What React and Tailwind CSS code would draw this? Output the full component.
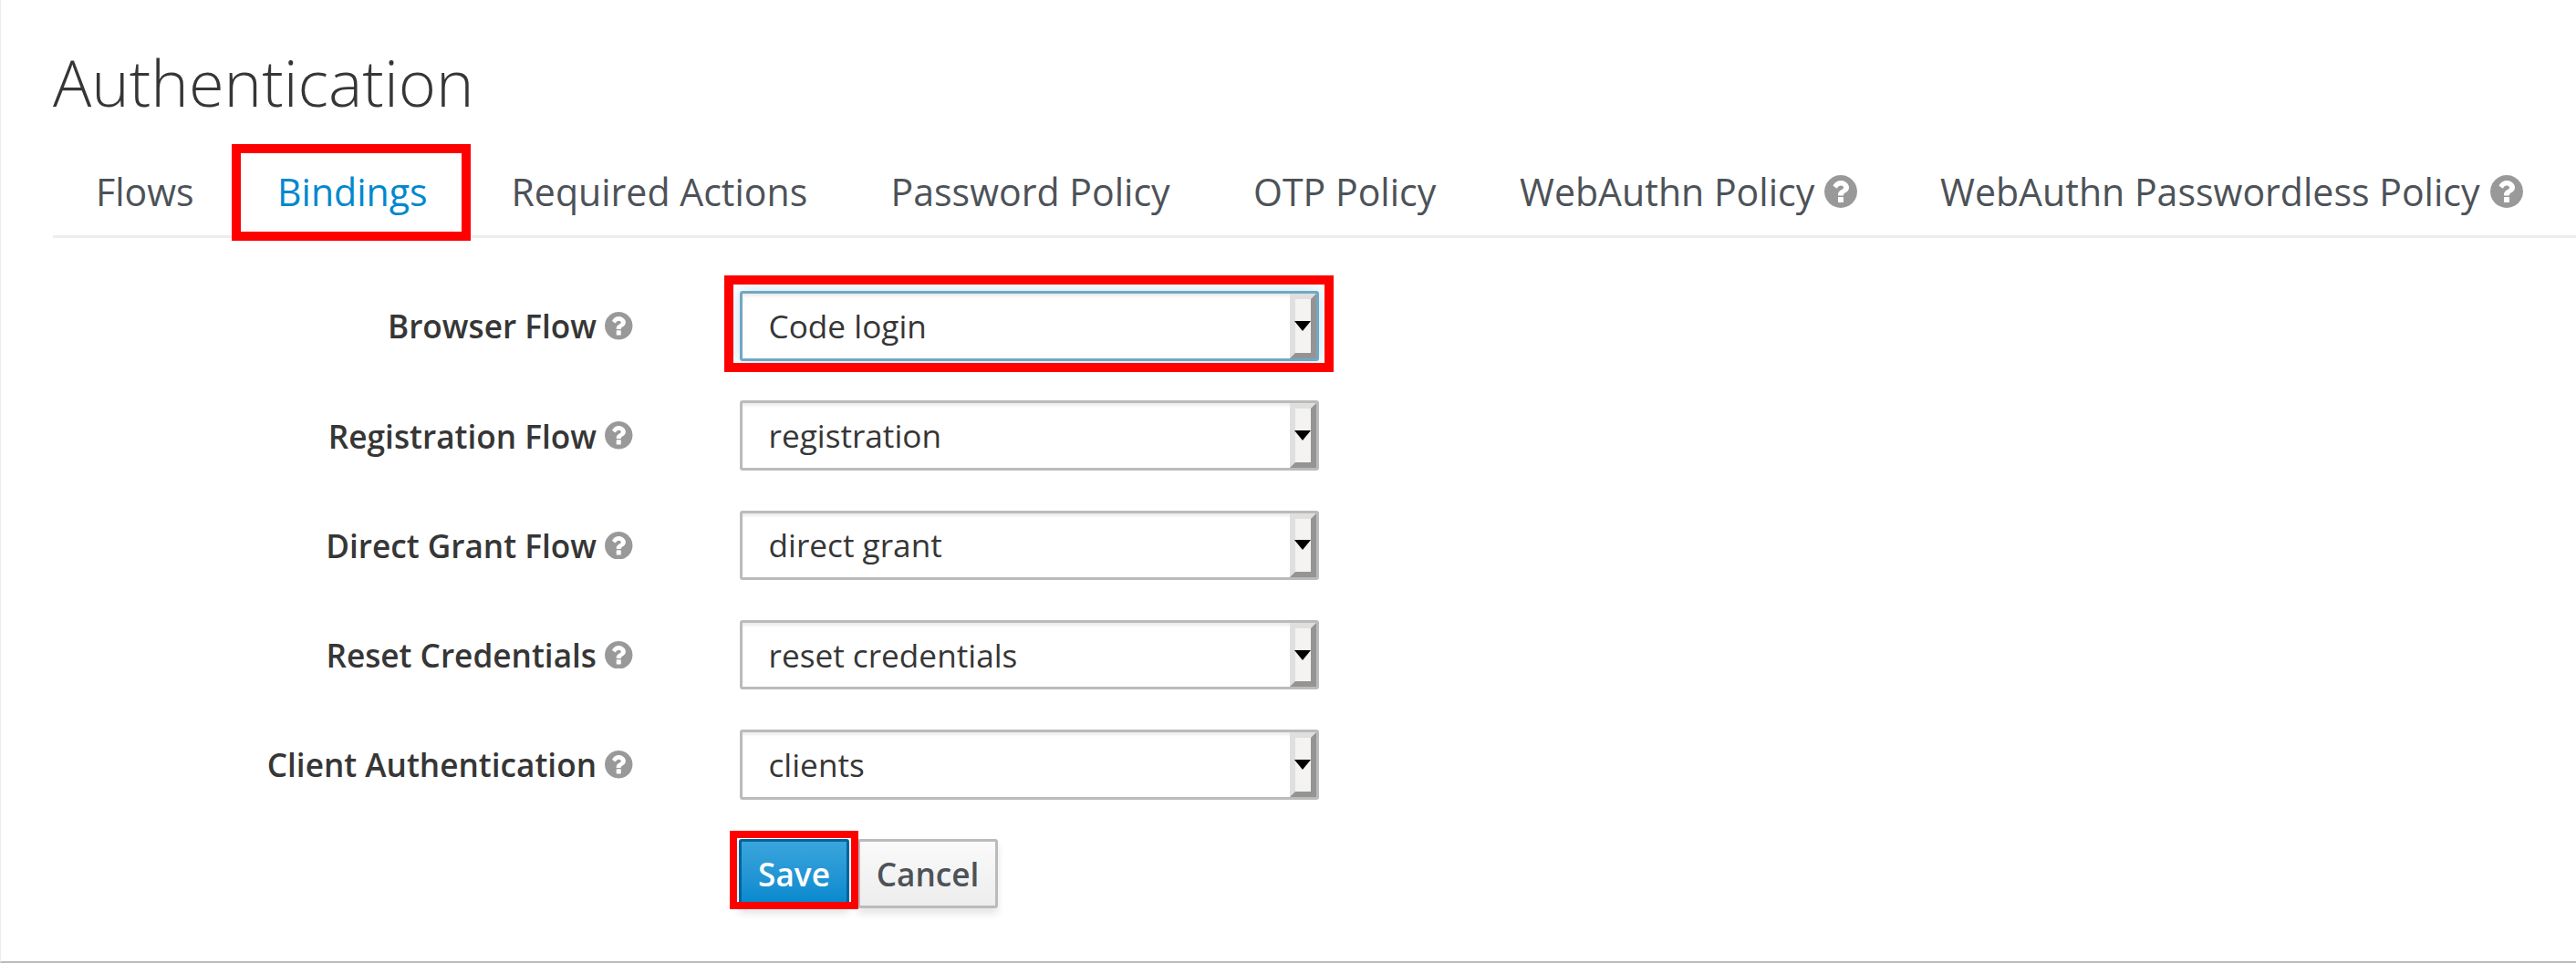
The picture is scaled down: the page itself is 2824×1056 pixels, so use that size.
import React from "react";

const tabs = [
  { label: "Flows", width: "w-[199px]" },
  { label: "Bindings", width: "w-[256.5px]", active: true },
  { label: "Required Actions", width: "w-[416px]" },
  { label: "Password Policy", width: "w-[397.5px]" },
  { label: "OTP Policy", width: "w-[292px]" },
  { label: "WebAuthn Policy", width: "w-[461px]", help: true },
  { label: "WebAuthn Passwordless Policy", width: "w-[690px]", help: true },
];

const fields = [
  { label: "Browser Flow", value: "Code login", focused: true },
  { label: "Registration Flow", value: "registration" },
  { label: "Direct Grant Flow", value: "direct grant" },
  { label: "Reset Credentials", value: "reset credentials" },
  { label: "Client Authentication", value: "clients" },
];

function HelpIcon({ className }) {
  return (
    <svg viewBox="128 128 1536 1536" fill="currentColor" className={`shrink-0 text-[#999] ${className}`}>
      <path d="M1024 1376v-192q0-14-9-23t-23-9h-192q-14 0-23 9t-9 23v192q0 14 9 23t23 9h192q14 0 23-9t9-23zm256-672q0-88-55.5-163t-138.5-116-170.5-41q-243 0-371 213-15 24 8 42l132 100q7 6 19 6 16 0 25-12 53-68 86-92 34-24 86-24 48 0 85.500 26t37.500 59q0 38-20 61t-68 45q-63 28-115.500 86.500t-52.500 125.500v36q0 14 9 23t23 9h192q14 0 23-9t9-23q0-19 21.500-49.500t54.500-49.500q32-18 49-28.500t46-35 44.500-48 28-60.500 12.500-81zm384 192q0 209-103 385.500t-279.500 279.500-385.500 103-385.500-103-279.500-279.500-103-385.500 103-385.500 279.500-279.500 385.500-103 385.500 103 279.500 279.500 103 385.500z" />
    </svg>
  );
}

function Tab({ label, active, help, width }) {
  return (
    <li className={`relative flex h-full shrink-0 items-center pt-[3px] ${width}`}>
      {active && (
        <span className="absolute -left-[50px] top-0 h-[106px] w-[262px] border-10 border-[#ff0000]" />
      )}
      <a className={active ? "text-[#0088ce]" : "text-[#4d5258]"}>{label}</a>
      {help && <HelpIcon className="ml-[11px] size-[36px]" />}
    </li>
  );
}

function SelectField({ label, value, focused }) {
  return (
    <div className="flex h-[76.5px] items-center">
      <label className="flex w-[692.5px] items-center justify-end gap-[9px] font-semibold">
        <span>{label}</span>
        <HelpIcon className="size-[30.5px]" />
      </label>
      <div
        className={`relative ml-[117px] flex h-full w-[635.5px] items-center justify-between rounded-[3px] border-3 pl-[29px] ${
          focused
            ? "border-[#72a7c4] shadow-[inset_0_3px_3px_rgba(3,3,3,0.075),0_0_18px_rgba(0,136,206,0.25)]"
            : "border-[#bbb] shadow-[inset_0_3px_3px_rgba(3,3,3,0.075)]"
        }`}
      >
        <span className="-mt-px">{value}</span>
        <span className="flex h-full w-[29.5px] items-center justify-center border-6 border-t-[#dfdfdf] border-r-[#949494] border-b-[#949494] border-l-[#dfdfdf] bg-[#f4f3f2]">
          <svg viewBox="0 0 18 11" className="h-[11px] w-[18px] shrink-0">
            <path d="M0 0H18L9 11Z" fill="#000" />
          </svg>
        </span>
        {focused && (
          <span className="absolute -left-[20px] -top-[20px] h-[106px] w-[668px] border-10 border-[#ff0000]" />
        )}
      </div>
    </div>
  );
}

export default function App() {
  return (
    <div className="h-[1056px] w-[2824px] overflow-hidden border-b-2 border-l border-b-[#bbb] border-l-[#ededed] bg-white font-['Open_Sans',sans-serif] text-[35.2px] leading-[50px] text-[#363636]">
      <h1 className="ml-[57px] pt-[42px] text-[70.4px] leading-[96px] font-light">Authentication</h1>
      <ul className="mt-[20px] ml-[57px] flex h-[103px] border-b-3 border-[#ededed] pl-[47px] text-[41.07px]">
        {tabs.map((t) => (
          <Tab key={t.label} {...t} />
        ))}
      </ul>
      <form className="mt-[58px] flex flex-col gap-[43.8px]">
        {fields.map((f) => (
          <SelectField key={f.label} {...f} />
        ))}
        <div className="ml-[809px] flex h-[76px] gap-[9px] font-semibold">
          <button
            type="button"
            className="relative w-[121px] rounded-[3px] border-3 border-[#00659c] bg-linear-to-b from-[#39a5dc] to-[#0088ce] text-white shadow-[0_6px_9px_rgba(3,3,3,0.1)]"
          >
            Save
            <span className="absolute -left-[13px] -top-[12px] h-[86px] w-[141px] border-8 border-[#ff0000]" />
          </button>
          <button
            type="button"
            className="w-[154px] rounded-[3px] border-3 border-[#bbb] bg-linear-to-b from-[#fafafa] to-[#ededed] text-[#4d5258] shadow-[0_6px_9px_rgba(3,3,3,0.1)]"
          >
            Cancel
          </button>
        </div>
      </form>
    </div>
  );
}
